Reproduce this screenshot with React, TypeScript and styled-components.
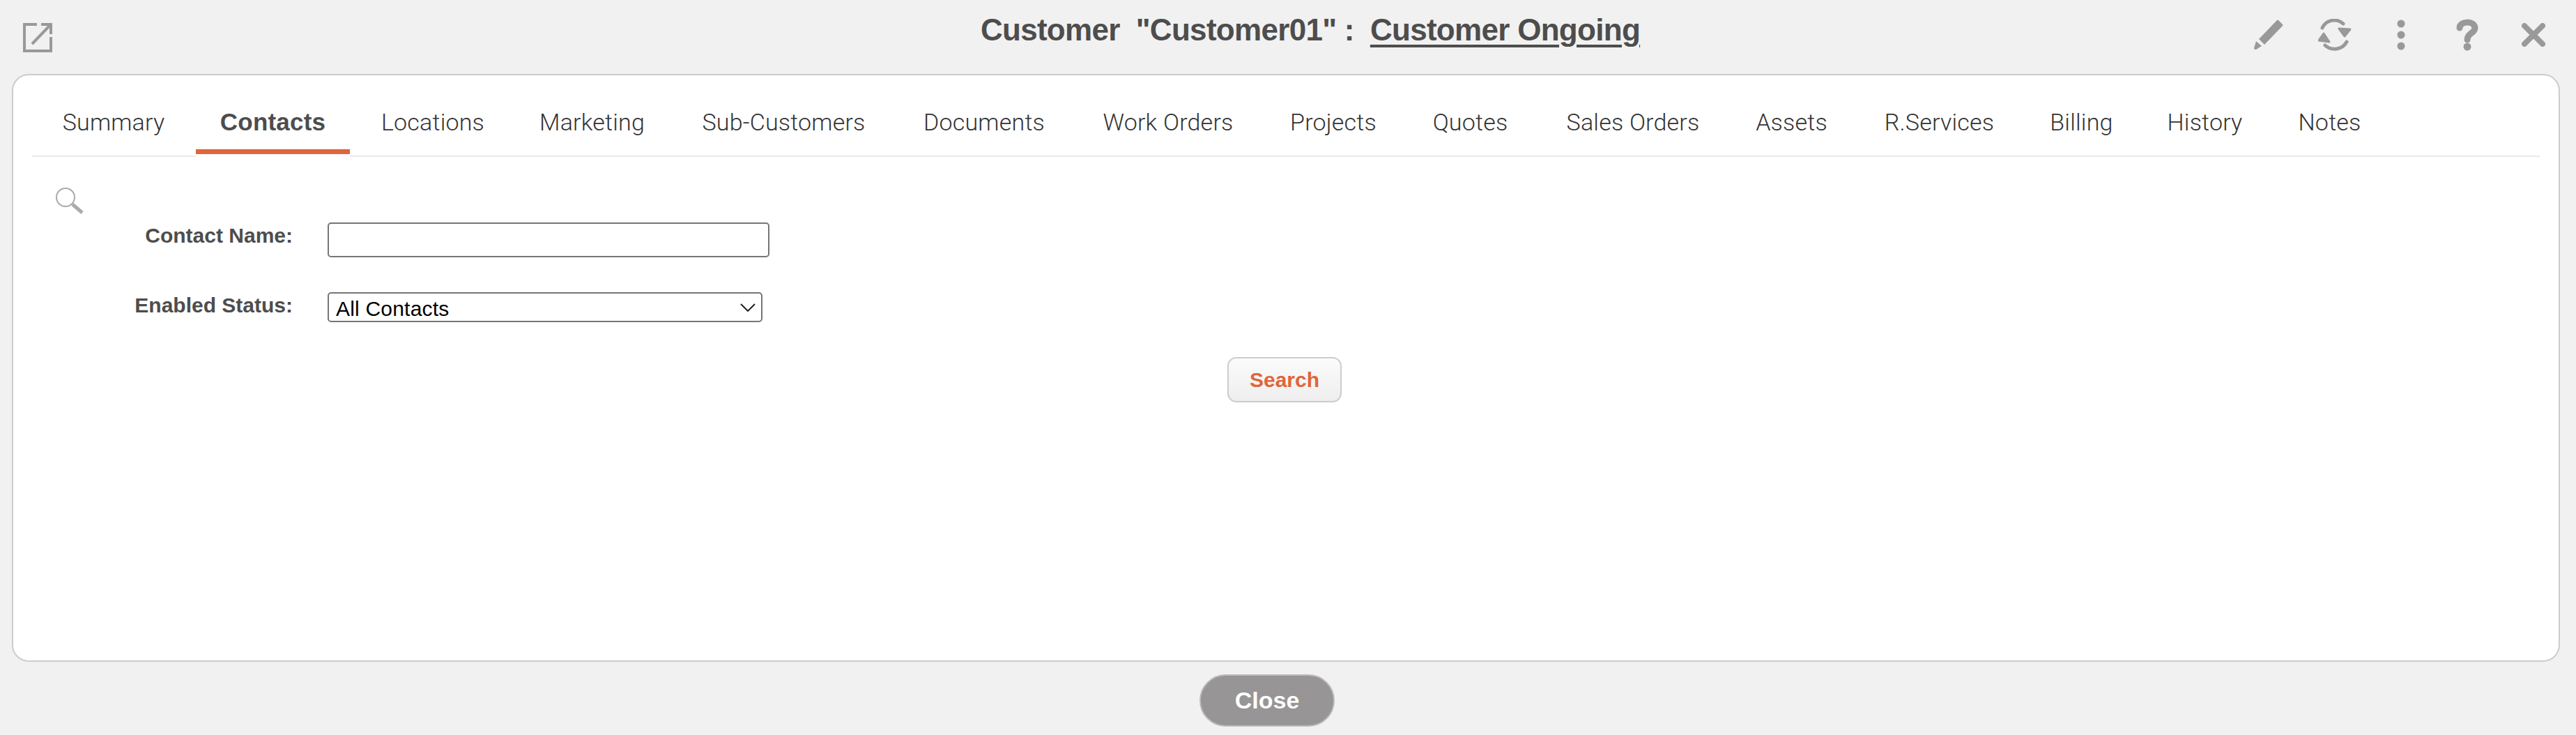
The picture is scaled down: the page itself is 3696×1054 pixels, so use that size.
import React, { FC } from 'react';
import styled, { createGlobalStyle } from 'styled-components';

const FONT = '"Liberation Sans", Arial, sans-serif';
const ORANGE = '#e0653a';
const TEXT = '#4d4d4d';
const ICON = '#999999';

const TABS = [
  { label: 'Summary', width: 216 },
  { label: 'Contacts', width: 221 },
  { label: 'Locations', width: 218 },
  { label: 'Marketing', width: 219 },
  { label: 'Sub-Customers', width: 311 },
  { label: 'Documents', width: 244 },
  { label: 'Work Orders', width: 264 },
  { label: 'Projects', width: 190 },
  { label: 'Quotes', width: 183 },
  { label: 'Sales Orders', width: 264 },
  { label: 'Assets', width: 171 },
  { label: 'R.Services', width: 233 },
  { label: 'Billing', width: 155 },
  { label: 'History', width: 179 },
  { label: 'Notes', width: 159 }
];

const App: FC = () => {
  return (
    <Page>
      <GlobalStyle />
      <Header>
        <OpenLink>
          <svg width="42" height="42" viewBox="0 0 42 42" fill="none" stroke={ICON} strokeWidth="4">
            <path d="M20 2H2v38h38V20" />
            <path d="M13 30 L38 4" strokeWidth="4" />
            <path d="M26 2h14v14" />
          </svg>
        </OpenLink>
        <Title>
          Customer&nbsp; "Customer01" :&nbsp; <TitleLink>Customer Ongoing</TitleLink>
        </Title>
        <Actions>
          <ActionIcon>
            <svg width="42" height="44" viewBox="0 0 42 44" fill={ICON}>
              <path d="M35 1 L41 7 Q42 8 41 9 L15 36 L7 28 L33 1 Q34 0 35 1Z" />
              <path d="M3 31 L11 38 L3 43 Q0 43 0 41Z" />
            </svg>
          </ActionIcon>
          <ActionIcon>
            <svg width="48" height="46" viewBox="0 0 48 46" fill={ICON}>
              <path d="M6 13 A19 19 0 0 1 36 7" fill="none" stroke={ICON} strokeWidth="5" strokeLinecap="round" />
              <path d="M30 14 L46 15 L38 25Z" stroke={ICON} strokeWidth="3" strokeLinejoin="round" />
              <path d="M41 33 A20 20 0 0 1 10 38" fill="none" stroke={ICON} strokeWidth="5" strokeLinecap="round" />
              <path d="M1 31 L8 21 L16 33Z" stroke={ICON} strokeWidth="3" strokeLinejoin="round" />
            </svg>
          </ActionIcon>
          <ActionIcon>
            <svg width="12" height="44" viewBox="0 0 12 44" fill={ICON}>
              <circle cx="6" cy="6" r="5.500" />
              <circle cx="6" cy="22" r="5.500" />
              <circle cx="6" cy="38" r="5.500" />
            </svg>
          </ActionIcon>
          <ActionIcon>
            <svg width="32" height="46" viewBox="0 0 32 46" fill="none">
              <path d="M5 13 C5 3 26 2 27 13 C27 21 16 20 16 30" stroke={ICON} strokeWidth="9" strokeLinecap="round" />
              <circle cx="16" cy="40" r="5.500" fill={ICON} />
            </svg>
          </ActionIcon>
          <ActionIcon>
            <svg width="34" height="34" viewBox="0 0 34 34" fill="none">
              <path d="M4 4 L30 30 M30 4 L4 30" stroke={ICON} strokeWidth="8" strokeLinecap="round" />
            </svg>
          </ActionIcon>
        </Actions>
      </Header>

      <Panel>
        <TabBar>
          {TABS.map((tab) => (
            <Tab key={tab.label} $width={tab.width} $active={tab.label === 'Contacts'}>{tab.label}</Tab>
          ))}
        </TabBar>

        <SearchToggle>
          <svg width="42" height="40" viewBox="0 0 42 40" fill="none">
            <circle cx="15" cy="15" r="13" stroke="#aaaaaa" strokeWidth="2" />
            <path d="M25 25 L39 37" stroke="#aaaaaa" strokeWidth="5" />
          </svg>
        </SearchToggle>

        <FormRow>
          <FieldLabel>Contact Name:</FieldLabel>
          <TextInput type="text" />
        </FormRow>
        <StatusRow>
          <FieldLabel>Enabled Status:</FieldLabel>
          <SelectWrap>
            <StatusSelect defaultValue="All Contacts">
              <option>All Contacts</option>
            </StatusSelect>
            <SelectArrow width="22" height="12" viewBox="0 0 22 12" fill="none">
              <path d="M1 1 L11 11 L21 1" stroke="#222222" strokeWidth="2" />
            </SelectArrow>
          </SelectWrap>
        </StatusRow>

        <ButtonRow>
          <SearchButton>Search</SearchButton>
        </ButtonRow>
      </Panel>

      <Footer>
        <CloseButton>Close</CloseButton>
      </Footer>
    </Page>
  );
};

const GlobalStyle = createGlobalStyle`
  html, body {
    margin: 0;
    padding: 0;
    background: #f1f1f1;
  }
`;

const Page = styled.div`
  display: flex;
  flex-direction: column;
  width: 3696px;
  height: 1054px;
  overflow: hidden;
  font-family: ${FONT};
  color: ${TEXT};
  background: #f1f1f1;
`;

const Header = styled.div`
  display: grid;
  grid-template-columns: 1fr auto 1fr;
  align-items: flex-start;
  height: 106px;
  box-sizing: border-box;
  flex-shrink: 0;
`;

const OpenLink = styled.a`
  display: block;
  width: 42px;
  height: 42px;
  margin: 33px 0 0 33px;
`;

const Title = styled.h1`
  margin: 18px 0 0;
  padding-left: 64px;
  font-size: 44px;
  line-height: 50px;
  font-weight: 700;
  letter-spacing: -0.7px;
  white-space: pre;
  color: ${TEXT};
`;

const TitleLink = styled.a`
  text-decoration: underline;
  text-underline-offset: 6px;
  text-decoration-thickness: 4px;
`;

const Actions = styled.div`
  display: flex;
  justify-content: flex-end;
  padding: 27px 14px 0 0;
`;

const ActionIcon = styled.a`
  display: flex;
  justify-content: center;
  align-items: center;
  width: 95px;
  height: 46px;
`;

const Panel = styled.div`
  display: flex;
  flex-direction: column;
  flex-shrink: 0;
  box-sizing: border-box;
  width: 3656px;
  height: 843px;
  margin-left: 17px;
  padding: 0 27px;
  background: #ffffff;
  border: 2px solid #cccccc;
  border-radius: 24px;
`;

const TabBar = styled.div`
  display: flex;
  gap: 10px;
  height: 117px;
  padding-left: 9px;
  box-sizing: border-box;
  border-bottom: 2px solid #e9e9e9;
`;

const Tab = styled.a<{ $active?: boolean; $width: number }>`
  box-sizing: border-box;
  width: ${({ $width }) => $width}px;
  height: 117px;
  padding-top: 47px;
  text-align: center;
  font-family: ${({ $active }) => ($active ? FONT : `Roboto, ${FONT}`)};
  font-size: ${({ $active }) => ($active ? '35px' : '34px')};
  line-height: 40px;
  letter-spacing: 0.2px;
  font-weight: ${({ $active }) => ($active ? 700 : 300)};
  color: ${({ $active }) => ($active ? TEXT : '#333333')};
  white-space: nowrap;
  ${({ $active }) => $active && `
    border-bottom: 4px solid #ffffff;
    box-shadow: inset 0 -7px 0 ${ORANGE};
  `}
`;

const SearchToggle = styled.div`
  height: 40px;
  margin: 43px 0 0 33px;
`;

const FormRow = styled.div`
  display: flex;
  align-items: flex-start;
  gap: 50px;
  margin-top: 11px;
`;

const StatusRow = styled(FormRow)`
  margin-top: 50px;
`;

const FieldLabel = styled.label`
  width: 374px;
  font-size: 30px;
  line-height: 34px;
  font-weight: 700;
  text-align: right;
  color: ${TEXT};
  transform: translateY(2px);
`;

const TextInput = styled.input`
  box-sizing: border-box;
  width: 634px;
  height: 50px;
  padding: 0 10px;
  background: #ffffff;
  border: 2px solid #767676;
  border-radius: 5px;
  font-family: ${FONT};
  font-size: 30px;
  outline: none;
`;

const SelectWrap = styled.div`
  position: relative;
  width: 624px;
  height: 43px;
`;

const StatusSelect = styled.select`
  appearance: none;
  display: block;
  box-sizing: border-box;
  width: 100%;
  height: 100%;
  padding: 3px 10px 0;
  background: #ffffff;
  border: 2px solid #767676;
  border-radius: 5px;
  font-family: ${FONT};
  font-size: 30px;
  letter-spacing: 0.2px;
  color: #000000;
`;

const SelectArrow = styled.svg`
  position: absolute;
  top: 16px;
  right: 10px;
  pointer-events: none;
`;

const ButtonRow = styled.div`
  display: flex;
  justify-content: center;
  margin-top: 50px;
`;

const SearchButton = styled.button`
  box-sizing: border-box;
  width: 164px;
  height: 65px;
  margin-left: -4px;
  padding: 0;
  background: linear-gradient(#fbfbfb, #eeeeee);
  border: 2px solid #cccccc;
  border-radius: 13px;
  font-family: ${FONT};
  font-size: 30px;
  font-weight: 700;
  color: ${ORANGE};
`;

const Footer = styled.div`
  display: flex;
  justify-content: center;
  padding: 18px 60px 0 0;
`;

const CloseButton = styled.button`
  box-sizing: border-box;
  width: 194px;
  height: 75px;
  padding: 0;
  background: #979595;
  border: 2px solid #bbbbbb;
  border-radius: 38px;
  font-family: ${FONT};
  font-size: 34px;
  font-weight: 700;
  color: #ffffff;
`;

export default App;
